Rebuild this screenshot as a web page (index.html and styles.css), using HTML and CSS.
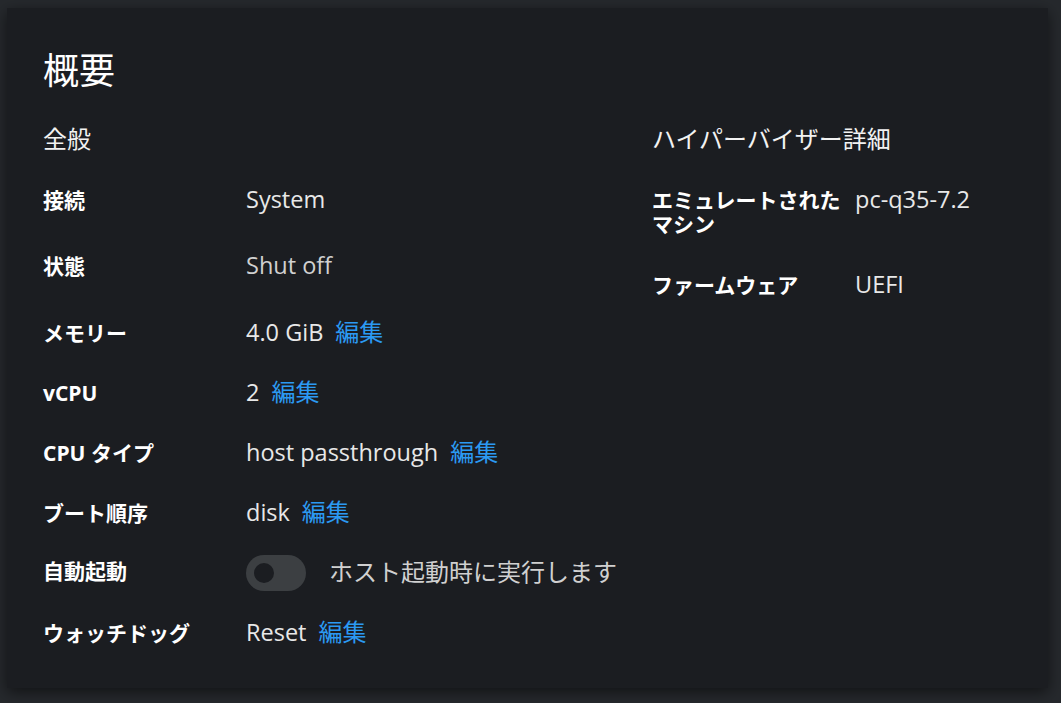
FILE: index.html
```html
<!DOCTYPE html>
<html lang="ja">
<head>
<meta charset="utf-8">
<title>概要</title>
<link rel="stylesheet" href="styles.css">
</head>
<body>
<main class="card">
  <h1 class="title">概要</h1>
  <div class="cols">
    <section class="col col-left">
      <h2 class="heading">全般</h2>
      <dl class="dl dl-left">
        <div class="row tall"><dt>接続</dt><dd>System</dd></div>
        <div class="row tall"><dt>状態</dt><dd class="muted">Shut off</dd></div>
        <div class="row"><dt>メモリー</dt><dd>4.0 GiB<a class="edit" href="#">編集</a></dd></div>
        <div class="row"><dt>vCPU</dt><dd>2<a class="edit" href="#">編集</a></dd></div>
        <div class="row"><dt>CPU タイプ</dt><dd>host passthrough<a class="edit" href="#">編集</a></dd></div>
        <div class="row"><dt>ブート順序</dt><dd>disk<a class="edit" href="#">編集</a></dd></div>
        <div class="row switch-row"><dt>自動起動</dt><dd class="switch-cell"><span class="switch"><span class="knob"></span></span><span class="switch-label">ホスト起動時に実行します</span></dd></div>
        <div class="row"><dt>ウォッチドッグ</dt><dd>Reset<a class="edit" href="#">編集</a></dd></div>
      </dl>
    </section>
    <section class="col col-right">
      <h2 class="heading">ハイパーバイザー詳細</h2>
      <dl class="dl dl-right">
        <div class="row"><dt>エミュレートされたマシン</dt><dd>pc-q35-7.2</dd></div>
        <div class="row"><dt>ファームウェア</dt><dd>UEFI</dd></div>
      </dl>
    </section>
  </div>
</main>
</body>
</html>
```

FILE: styles.css
```css
* { box-sizing: border-box; }

html, body {
  margin: 0;
  height: 100%;
}

body {
  background: #26292d;
  padding: 8px 13px 15px 7px;
  font-family: "Open Sans", "Noto Sans CJK JP", sans-serif;
  color: #e6e6e6;
}

.card {
  height: 680px;
  background: #1b1d21;
  box-shadow: 0 4px 14px rgba(0, 0, 0, 0.55);
  padding: 40px 36px 0 36px;
}

.title {
  margin: 0;
  font-size: 36px;
  line-height: 40px;
  font-weight: 400;
  color: #ffffff;
  font-family: "Noto Sans CJK JP", sans-serif;
}

.cols {
  display: grid;
  grid-template-columns: 609px 1fr;
  margin-top: 35px;
}

.heading {
  margin: 0;
  font-size: 24px;
  line-height: 30px;
  font-weight: 400;
  color: #f2f2f2;
  font-family: "Noto Sans CJK JP", sans-serif;
}

.dl {
  margin: 34px 0 0 0;
}

.row {
  display: grid;
  grid-template-columns: 195px 1fr;
  column-gap: 8px;
  align-items: baseline;
  height: 60px;
}

.row.tall {
  height: 66px;
}

.row.switch-row {
  align-items: start;
}

.dl-right .row {
  height: auto;
  margin-bottom: 36px;
}

dt {
  font-size: 21px;
  line-height: 24px;
  font-weight: 700;
  color: #ffffff;
}

dd {
  margin: 0;
  font-size: 23.5px;
  line-height: 24px;
  color: #e8e8e8;
  display: flex;
  align-items: baseline;
}

.muted {
  color: #d0d0d0;
}

.edit {
  margin-left: 12px;
  font-size: 24px;
  color: #2b9af3;
  text-decoration: none;
  font-family: "Noto Sans CJK JP", sans-serif;
}

.switch-cell {
  align-items: flex-start;
}

.switch {
  display: flex;
  align-items: center;
  width: 60px;
  height: 36px;
  margin-top: -4px;
  border-radius: 18px;
  background: #3c3f42;
  padding-left: 8px;
  flex-shrink: 0;
}

.knob {
  width: 20px;
  height: 20px;
  border-radius: 50%;
  background: #1b1d21;
}

.switch-label {
  margin-left: 23px;
  font-size: 24px;
  color: #d0d0d0;
  font-family: "Noto Sans CJK JP", sans-serif;
}
```
